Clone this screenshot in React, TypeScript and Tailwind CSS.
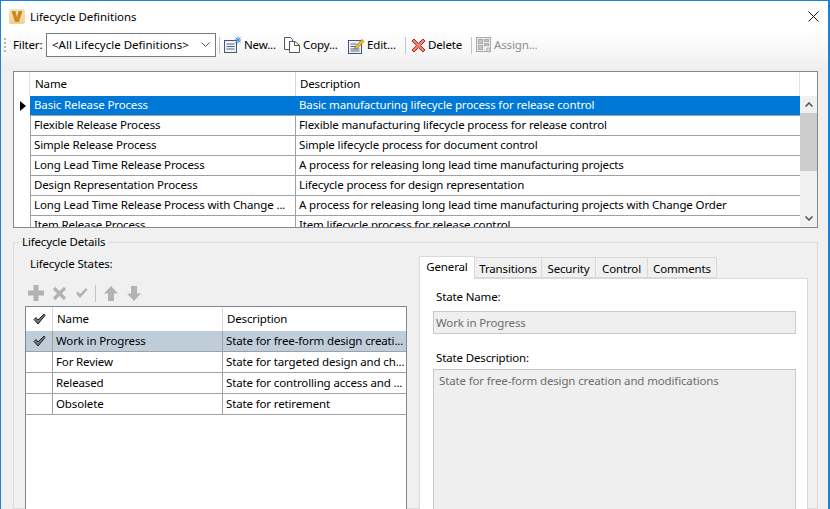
import React from "react"

const definitions = [
  ["Basic Release Process", "Basic manufacturing lifecycle process for release control"],
  ["Flexible Release Process", "Flexible manufacturing lifecycle process for release control"],
  ["Simple Release Process", "Simple lifecycle process for document control"],
  ["Long Lead Time Release Process", "A process for releasing long lead time manufacturing projects"],
  ["Design Representation Process", "Lifecycle process for design representation"],
  ["Long Lead Time Release Process with Change ...", "A process for releasing long lead time manufacturing projects with Change Order"],
  ["Item Release Process", "Item lifecycle process for release control"],
]

const states = [
  ["Work in Progress", "State for free-form design creati..."],
  ["For Review", "State for targeted design and ch..."],
  ["Released", "State for controlling access and ..."],
  ["Obsolete", "State for retirement"],
]

const tabs = [
  ["Transitions", "w-[67px]"],
  ["Security", "w-[54px]"],
  ["Control", "w-[52px]"],
  ["Comments", "w-[69px]"],
]

// --- toolbar icons ---
function VaultLogo() {
  return (
    <svg width="16" height="15" viewBox="0 0 16 15">
      <defs>
        <linearGradient id="vaultBg" x1="0" y1="0" x2="0" y2="1">
          <stop offset="0" stopColor="#f6e2bd" />
          <stop offset="1" stopColor="#f0cf97" />
        </linearGradient>
      </defs>
      <rect width="16" height="15" rx="2" fill="url(#vaultBg)" />
      <path d="M2.5 2H6.5L8 8.5L9.5 2H13.5L10 13H6Z" fill="#c98a1e" />
    </svg>
  )
}

function NewIcon() {
  return (
    <svg width="18" height="18" viewBox="0 0 18 18">
      <rect x="0.5" y="4.5" width="12" height="12" fill="#eef2f7" stroke="#4a5568" />
      <path d="M2.5 8h8M2.5 10.5h8M2.5 13h8" stroke="#4f6a8f" />
      <path d="M14 0.5v7M10.5 4h7M11.5 1.5l5 5M16.5 1.5l-5 5" stroke="#3f8fd8" />
    </svg>
  )
}

function CopyIcon() {
  return (
    <svg width="17" height="18" viewBox="0 0 17 18">
      <path d="M0.5 1.5H6.5L8.5 3.5V13.5H0.5Z" fill="#fff" stroke="#555" />
      <path d="M5.5 5.5H11L15.5 9.5V16.5H5.5Z" fill="#fff" stroke="#555" />
      <path d="M10.5 5.5V9.5H15.5" fill="none" stroke="#555" />
    </svg>
  )
}

function EditIcon() {
  return (
    <svg width="17" height="17" viewBox="0 0 17 17">
      <rect x="0.5" y="3.5" width="13" height="13" fill="#eef2f7" stroke="#4a5568" />
      <path d="M2.5 7h6M2.5 9.5h5M2.5 12h9M2.5 14h9" stroke="#4f6a8f" />
      <path d="M7 10L14 2.5L16 4.5L9 11.5L6.5 12Z" fill="#f2c230" stroke="#9a6a10" strokeWidth="0.8" />
    </svg>
  )
}

function DeleteIcon() {
  return (
    <svg width="15" height="15" viewBox="0 0 15 15">
      <path d="M1 3L3 1L7.5 5.5L12 1L14 3L9.5 7.5L14 12L12 14L7.5 9.5L3 14L1 12L5.5 7.5Z" fill="#e8867e" stroke="#b5271d" />
    </svg>
  )
}

function AssignIcon() {
  return (
    <svg width="16" height="16" viewBox="0 0 16 16" fill="none" stroke="#a9a9a9">
      <rect x="0.5" y="0.5" width="14" height="14" fill="#eee" />
      <rect x="2.5" y="2.5" width="4" height="4" fill="#c8c8c8" />
      <rect x="8.5" y="2.5" width="4" height="2" fill="#c8c8c8" />
      <rect x="2.5" y="8.5" width="4" height="4" fill="#c8c8c8" />
      <rect x="8.5" y="6.5" width="4" height="2" fill="#c8c8c8" />
      <circle cx="12.5" cy="13" r="2" fill="#ddd" />
    </svg>
  )
}

function CheckMark() {
  return (
    <svg width="13" height="12" viewBox="0 0 13 12">
      <path d="M1 6.5L3 4.5L5 7L11 1L12 2.5L5 11Z" fill="#777" stroke="#222" />
    </svg>
  )
}

function GreyPlus() {
  return (
    <svg width="16" height="16" viewBox="0 0 16 16">
      <path d="M5.5 0H10.5V5.5H16V10.5H10.5V16H5.5V10.5H0V5.5H5.5Z" fill="#b2b2b2" />
    </svg>
  )
}

function GreyCross() {
  return (
    <svg width="15" height="15" viewBox="0 0 15 15">
      <path d="M2 2L13 13M13 2L2 13" stroke="#b2b2b2" strokeWidth="3.2" />
    </svg>
  )
}

function GreyCheck() {
  return (
    <svg width="13" height="12" viewBox="0 0 13 12">
      <path d="M1 6.5L3 4.5L5 7L11 1L12.5 2.5L5 11Z" fill="#b2b2b2" />
    </svg>
  )
}

function GreyArrow({ down }: { down?: boolean }) {
  return (
    <svg width="14" height="15" viewBox="0 0 14 15" className={down ? "rotate-180" : ""}>
      <path d="M7 0L14 7.5H10V15H4V7.5H0Z" fill="#b2b2b2" />
    </svg>
  )
}

function ToolButton({ icon, label, className, disabled }: { icon: React.ReactNode; label: string; className?: string; disabled?: boolean }) {
  return (
    <div className={`flex items-center gap-[2px] ${disabled ? "text-[#8d8d8d]" : "text-black"} ${className ?? ""}`}>
      {icon}
      <span>{label}</span>
    </div>
  )
}

function Sep({ className }: { className?: string }) {
  return <div className={`w-px h-[17px] bg-[#c4c4c4] ${className ?? ""}`} />
}

export default function App() {
  return (
    <div className="font-['Noto_Sans','Open_Sans',sans-serif] w-[830px] h-[509px] overflow-hidden bg-[#f0f0f0] border-l border-r-2 border-t border-[#1883d7] text-[11.5px] tracking-[-0.14px] text-black flex flex-col">
      {/* title bar */}
      <div className="h-[31px] shrink-0 bg-white flex items-center pl-[8px] pr-[9px]">
        <VaultLogo />
        <span className="ml-[5px] tracking-[-0.04px]">Lifecycle Definitions</span>
        <svg width="11" height="11" viewBox="0 0 11 11" className="ml-auto" stroke="#111" fill="none">
          <path d="M0.5 0.5L10.5 10.5M10.5 0.5L0.5 10.5" />
        </svg>
      </div>

      {/* toolbar */}
      <div className="h-[39px] shrink-0 bg-gradient-to-b from-white to-[#eeeeee] flex items-start pl-[3px] pt-[1px]">
        <div className="flex items-center h-[24px]">
          <div className="w-[3px] h-[14px] mr-[6px] border-l-2 border-dotted border-[#b5b5b5]" />
          <span className="w-[33px]">Filter:</span>
          <div className="w-[170px] h-[24px] bg-white border border-[#7a7a7a] flex items-center pl-[5px] pr-[5px]">
            <span className="tracking-[0px]">&lt;All Lifecycle Definitions&gt;</span>
            <svg width="9" height="6" viewBox="0 0 9 6" className="ml-auto" fill="none" stroke="#555">
              <path d="M0.5 0.5L4.5 4.5L8.5 0.5" />
            </svg>
          </div>
          <Sep className="ml-[3px] mr-[4px]" />
          <ToolButton icon={<NewIcon />} label="New..." className="w-[60px]" />
          <ToolButton icon={<CopyIcon />} label="Copy..." className="w-[64px]" />
          <ToolButton icon={<EditIcon />} label="Edit..." className="w-[57px]" />
          <Sep className="mr-[5px]" />
          <ToolButton icon={<DeleteIcon />} label="Delete" className="w-[60px]" />
          <Sep className="mr-[4px]" />
          <ToolButton icon={<AssignIcon />} label="Assign..." disabled />
        </div>
      </div>

      {/* definitions grid */}
      <div className="ml-[12px] mr-[10px] h-[157px] shrink-0 border border-[#828790] bg-white flex overflow-hidden">
        <div className="flex-1 min-w-0">
          <div className="flex h-[24px] items-center">
            <div className="w-[16px] h-full shrink-0 border-r border-[#e2e2e2]" />
            <div className="w-[266px] h-full shrink-0 border-r border-[#d5d5d5] flex items-center pl-[5px]">Name</div>
            <div className="flex-1 h-full border-r border-[#e2e2e2] flex items-center pl-[4px]">Description</div>
          </div>
          {definitions.map(([name, desc], i) => (
            <div key={name} className="flex h-[20px]">
              <div className="w-[16px] shrink-0 flex items-center justify-center">
                {i === 0 && <div className="ml-[1px] border-y-[5px] border-l-[6px] border-y-transparent border-l-black" />}
              </div>
              <div className={`flex flex-1 min-w-0 border-b border-[#a0a0a0] ${i === 0 ? "bg-[#0078d7] text-white" : ""}`}>
                <div className={`w-[266px] shrink-0 leading-[18px] whitespace-nowrap ${i === 0 ? "pl-[4px]" : "pl-[3px] border-x border-[#a0a0a0]"}`}>{name}</div>
                <div className="flex-1 pl-[3px] leading-[18px] whitespace-nowrap">{desc}</div>
              </div>
            </div>
          ))}
        </div>
        {/* scrollbar */}
        <div className="w-[17px] shrink-0 flex flex-col">
          <div className="h-[24px] bg-white" />
          <div className="flex-1 bg-[#f0f0f0] flex flex-col">
            <div className="h-[17px] flex items-center justify-center">
              <svg width="8" height="5" viewBox="0 0 8 5" fill="none" stroke="#505050" strokeWidth="1.5"><path d="M0.5 4.5L4 1L7.5 4.5" /></svg>
            </div>
            <div className="h-[58px] bg-[#cdcdcd]" />
            <div className="flex-1" />
            <div className="h-[17px] flex items-center justify-center">
              <svg width="8" height="5" viewBox="0 0 8 5" fill="none" stroke="#505050" strokeWidth="1.5"><path d="M0.5 0.5L4 4L7.5 0.5" /></svg>
            </div>
          </div>
        </div>
      </div>

      {/* details */}
      <fieldset className="mt-[6px] ml-[12px] mr-[10px] flex-1 min-h-0 border border-[#dcdcdc] pl-[11px]">
        <legend className="-ml-[6px] px-[3px] leading-[16px]">Lifecycle Details</legend>
        <div className="flex">
          {/* states */}
          <div className="w-[382px] shrink-0">
            <div className="pl-[5px] mt-[6px] leading-[16px]">Lifecycle States:</div>
            <div className="flex items-center h-[18px] mt-[12px] pl-[3px]">
              <GreyPlus />
              <div className="w-[8px]" />
              <GreyCross />
              <div className="w-[8px]" />
              <GreyCheck />
              <Sep className="ml-[7px] mr-[8px]" />
              <GreyArrow />
              <div className="w-[9px]" />
              <GreyArrow down />
            </div>
            <div className="mt-[4px] h-[300px] bg-white border border-[#828790]">
              <div className="flex h-[24px] items-center">
                <div className="w-[27px] h-full shrink-0 border-r border-[#d5d5d5] flex items-center justify-center"><CheckMark /></div>
                <div className="w-[170px] h-full shrink-0 border-r border-[#d5d5d5] flex items-center pl-[4px]">Name</div>
                <div className="flex-1 flex items-center pl-[4px]">Description</div>
              </div>
              {states.map(([name, desc], i) => (
                <div key={name} className={`flex h-[21px] border-b border-[#a0a0a0] ${i === 0 ? "bg-[#bfcddb]" : ""}`}>
                  <div className="w-[27px] shrink-0 border-r border-[#a0a0a0] flex items-center justify-center">{i === 0 && <CheckMark />}</div>
                  <div className="w-[170px] shrink-0 border-r border-[#a0a0a0] pl-[3px] leading-[20px]">{name}</div>
                  <div className="flex-1 min-w-0 pl-[3px] leading-[20px] whitespace-nowrap">{desc}</div>
                </div>
              ))}
            </div>
          </div>

          {/* tabs */}
          <div className="ml-[12px] w-[389px] shrink-0 mt-[5px]">
            <div className="flex items-end h-[23px]">
              <div className="w-[56px] h-[23px] bg-white border border-b-0 border-[#d9d9d9] text-center leading-[20px] relative z-10 -mb-px">General</div>
              {tabs.map(([t, w]) => (
                <div key={t} className={`h-[21px] bg-[#f0f0f0] border border-l-0 border-[#d9d9d9] text-center leading-[21px] ${w}`}>{t}</div>
              ))}
            </div>
            <div className="h-[300px] bg-white border border-[#d9d9d9] pl-[13px] pr-[11px]">
              <div className="pl-[3px] mt-[10px] leading-[16px]">State Name:</div>
              <div className="mt-[6px] h-[23px] bg-[#efefef] border border-[#c8c8c8] pl-[2px] leading-[21px] text-[#6d6d6d]">Work in Progress</div>
              <div className="pl-[3px] mt-[16px] leading-[16px]">State Description:</div>
              <div className="mt-[3px] h-[200px] bg-[#efefef] border border-[#c8c8c8] pl-[5px] pt-[2px] text-[#6d6d6d]">State for free-form design creation and modifications</div>
            </div>
          </div>
        </div>
      </fieldset>
    </div>
  )
}
